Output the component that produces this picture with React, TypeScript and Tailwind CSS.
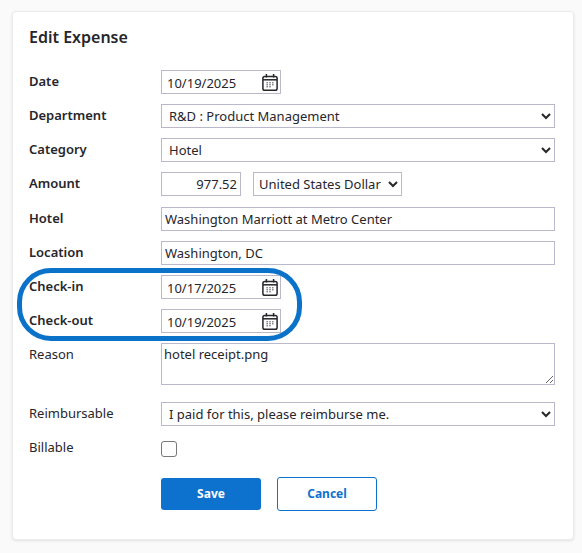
import React from 'react';

const fieldClass = "h-[24px] border border-[#b9b9cb] bg-white text-[13px] text-[#26262b] outline-none";

const CalendarIcon = () => (
  <svg width="16" height="17" viewBox="0 0 16 17" fill="none" className="shrink-0 mt-[1px]">
    <rect x="0.9" y="2.4" width="14.2" height="13.8" rx="1.8" stroke="#26262b" strokeWidth="1.5" />
    <path d="M1 5.8h14" stroke="#26262b" strokeWidth="1.5" />
    <path d="M4.4 0v3.4M11.6 0v3.4" stroke="#26262b" strokeWidth="1.5" />
    <path d="M4.4 8.8h1.6M7.2 8.8h1.6M10 8.8h1.6M4.4 10.8h1.6M7.2 10.8h1.6M10 10.8h1.6M4.4 12.8h1.6M7.2 12.8h1.6" stroke="#55555c" strokeWidth="1" />
  </svg>
);

const Row = ({ label, bold, children, className }: { label: string; bold?: boolean; children: React.ReactNode; className?: string }) => (
  <div className={`flex items-start ${className ?? ''}`}>
    <label className={`w-[132px] shrink-0 text-[13px] leading-[20px] pt-[1px] text-[#26262b] ${bold ? 'font-semibold' : ''}`}>{label}</label>
    {children}
  </div>
);

const DateField = ({ value }: { value: string }) => (
  <div className={`${fieldClass} w-[120px] flex items-center justify-between pl-[5px] pr-[2px]`}>
    <input defaultValue={value} className="w-[90px] bg-transparent outline-none leading-[20px] pt-[2px]" />
    <CalendarIcon />
  </div>
);

const SelectField = ({ value, className }: { value: string; className?: string }) => (
  <select defaultValue={value} className={`${fieldClass} ${className ?? ''}`}>
    <option>{value}</option>
  </select>
);

export default function App() {
  return (
    <div className="relative w-[582px] h-[553px] bg-[#fafafa] pt-[11px] pl-[12px] overflow-hidden" style={{ fontFamily: '"Noto Sans", sans-serif' }}>
      <div className="w-[562px] h-[529px] bg-white rounded-[4px] border border-[#ececec] shadow-[0_1px_3px_rgba(0,0,0,0.1)] pl-[16px] pt-[14px]">
        <h2 className="text-[16px] leading-[22px] font-semibold text-[#26262b]">Edit Expense</h2>

        <div className="mt-[22px] flex flex-col">
          <Row label="Date" bold>
            <DateField value="10/19/2025" />
          </Row>
          <Row label="Department" bold className="mt-[10px]">
            <SelectField value="R&D : Product Management" className="w-[394px] pl-[3px]" />
          </Row>
          <Row label="Category" bold className="mt-[10px]">
            <SelectField value="Hotel" className="w-[394px] pl-[3px]" />
          </Row>
          <Row label="Amount" bold className="mt-[10px]">
            <input defaultValue="977.52" className={`${fieldClass} w-[80px] text-right px-[3px]`} />
            <SelectField value="United States Dollar" className="w-[149px] ml-[12px] pl-[1px]" />
          </Row>
          <Row label="Hotel" bold className="mt-[11px]">
            <input defaultValue="Washington Marriott at Metro Center" className={`${fieldClass} w-[394px] px-[3px]`} />
          </Row>
          <Row label="Location" bold className="mt-[10px]">
            <input defaultValue="Washington, DC" className={`${fieldClass} w-[394px] px-[3px]`} />
          </Row>
          <Row label="Check-in" bold className="mt-[10px]">
            <DateField value="10/17/2025" />
          </Row>
          <Row label="Check-out" bold className="mt-[10px]">
            <DateField value="10/19/2025" />
          </Row>
          <Row label="Reason" className="mt-[10px]">
            <textarea defaultValue="hotel receipt.png" className="h-[42px] w-[394px] border border-[#b9b9cb] bg-white text-[13px] leading-[18px] text-[#26262b] px-[2px] py-[1px] outline-none" />
          </Row>
          <Row label="Reimbursable" className="mt-[17px]">
            <SelectField value="I paid for this, please reimburse me." className="w-[394px] pl-[3px]" />
          </Row>
          <Row label="Billable" className="mt-[10px]">
            <input type="checkbox" className="appearance-none mt-[5px] w-[16px] h-[16px] rounded-[3px] border border-[#77777c] bg-white" />
          </Row>
          <div className="mt-[20px] ml-[132px] flex items-center gap-[16px]">
            <button className="w-[100px] h-[32px] rounded-[3px] bg-[#0d72ce] text-white text-[12px] font-bold">Save</button>
            <button className="w-[100px] h-[34px] rounded-[3px] border border-[#0d72ce] bg-white text-[#0d72ce] text-[12px] font-bold">Cancel</button>
          </div>
        </div>
      </div>

      {/* callout around the check-in / check-out rows */}
      <div className="absolute left-[17px] top-[268px] w-[285px] h-[73px] rounded-[34px] border-[5px] border-[#0b72c9] pointer-events-none" />
    </div>
  );
}
